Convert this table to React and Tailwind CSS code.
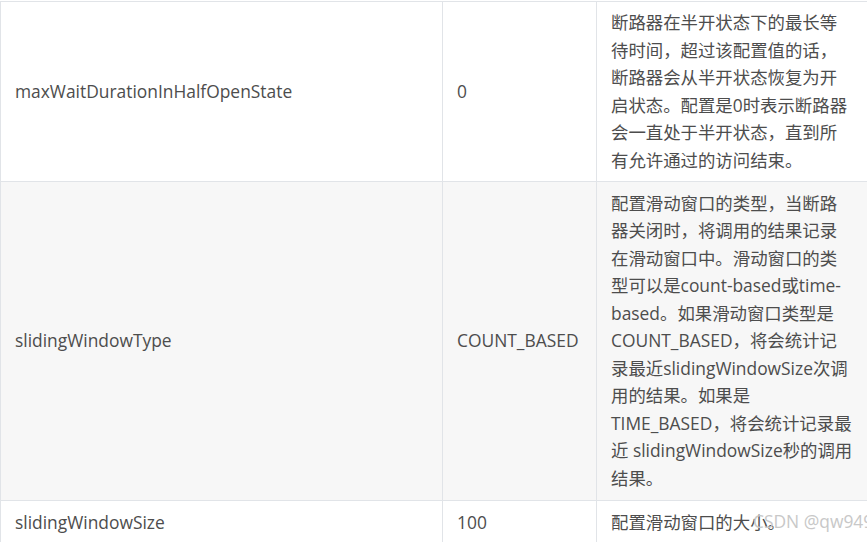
import React from "react";

const font = { fontFamily: '"Open Sans", "Noto Sans CJK SC", sans-serif' };

const row1 = [
  "断路器在半开状态下的最长等",
  "待时间，超过该配置值的话，",
  "断路器会从半开状态恢复为开",
  "启状态。配置是0时表示断路器",
  "会一直处于半开状态，直到所",
  "有允许通过的访问结束。",
];
const row2 = [
  "配置滑动窗口的类型，当断路",
  "器关闭时，将调用的结果记录",
  "在滑动窗口中。滑动窗口的类",
  "型可以是count-based或time-",
  "based。如果滑动窗口类型是",
  "COUNT_BASED，将会统计记",
  "录最近slidingWindowSize次调",
  "用的结果。如果是",
  "TIME_BASED，将会统计记录最",
  "近 slidingWindowSize秒的调用",
  "结果。",
];

function Lines({ lines }) {
  return lines.map((l, i) => (
    <div key={i} className="whitespace-nowrap">
      {l}
    </div>
  ));
}

export default function App() {
  const td = "border border-[#e1e4e8] px-[14px] py-[6px] align-middle";
  return (
    <div
      className="relative w-[867px] h-[542px] overflow-hidden bg-white pt-px text-[#4d4d4d] text-[17.4px] leading-[27.5px]"
      style={font}
    >
      <table className="border-collapse w-[867px] table-fixed">
        <colgroup>
          <col className="w-[442px]" />
          <col className="w-[154px]" />
          <col className="w-[271px]" />
        </colgroup>
        <tbody>
          <tr className="bg-white h-[180px]">
            <td className={td}>maxWaitDurationInHalfOpenState</td>
            <td className={td}>0</td>
            <td className={td}>
              <Lines lines={row1} />
            </td>
          </tr>
          <tr className="bg-[#f7f7f7] h-[319px]">
            <td className={td}>slidingWindowType</td>
            <td className={td}>COUNT_BASED</td>
            <td className={td}>
              <Lines lines={row2} />
            </td>
          </tr>
          <tr className="bg-white h-[44px]">
            <td className={td}>slidingWindowSize</td>
            <td className={td}>100</td>
            <td className={td}>配置滑动窗口的大小。</td>
          </tr>
        </tbody>
      </table>
      <div className="absolute left-[753px] top-[507px] whitespace-nowrap text-[#c8c8c8] text-[17.4px] leading-[28px]">
        CSDN @qw949
      </div>
    </div>
  );
}
